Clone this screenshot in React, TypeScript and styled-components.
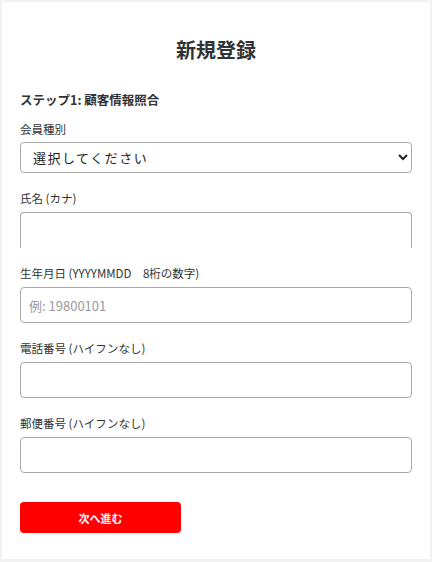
import styled, { createGlobalStyle } from "styled-components";

const GlobalStyle = createGlobalStyle`
  html, body {
    margin: 0;
    padding: 0;
    background: #f2f2f2;
  }
  body {
    padding: 2px;
    font-family: "Noto Sans CJK JP", "Noto Sans", sans-serif;
    color: #333;
  }
  * {
    box-sizing: border-box;
  }
`;

const fields = [
  { label: "氏名 (カナ)", placeholder: "", clipped: true },
  { label: "生年月日 (YYYYMMDD　8桁の数字)", placeholder: "例: 19800101" },
  { label: "電話番号 (ハイフンなし)", placeholder: "" },
  { label: "郵便番号 (ハイフンなし)", placeholder: "" },
];

export default function App() {
  return (
    <>
      <GlobalStyle />
      <SCard>
        <STitle>新規登録</STitle>
        <SStep>ステップ1: 顧客情報照合</SStep>
        <SField>
          <SLabel>会員種別</SLabel>
          <SSelect defaultValue="">
            <option value="">選択してください</option>
            <option value="a">一般会員</option>
            <option value="b">法人会員</option>
          </SSelect>
        </SField>
        {fields.map((f) => (
          <SField key={f.label}>
            <SLabel>{f.label}</SLabel>
            <SInput type="text" placeholder={f.placeholder} $clipped={f.clipped} />
          </SField>
        ))}
        <SButton type="button">次へ進む</SButton>
      </SCard>
    </>
  );
}

const SCard = styled.div`
  background: #fff;
  width: 428px;
  height: 557px;
  padding: 18px 18px 26px;
  display: flex;
  flex-direction: column;
`;

const STitle = styled.h1`
  margin: 16px 0 27px;
  font-size: 20px;
  line-height: 28px;
  font-weight: 700;
  text-align: center;
  color: #333;
`;

const SStep = styled.h2`
  margin: 0 0 11px;
  font-size: 12.5px;
  line-height: 18px;
  font-weight: 700;
  color: #333;
`;

const SField = styled.div`
  display: flex;
  flex-direction: column;
  margin-bottom: 16px;
`;

const SLabel = styled.label`
  font-size: 11.5px;
  line-height: 18px;
  margin-bottom: 5px;
  color: #333;
`;

const SSelect = styled.select`
  height: 31px;
  width: 100%;
  margin: -1px 0 0;
  padding: 0 8px;
  border: 1px solid #aaa;
  border-radius: 4px;
  background: #fff;
  font-family: "Noto Sans CJK JP", sans-serif;
  font-size: 13px;
  letter-spacing: 1.5px;
  color: #222;
`;

const SInput = styled.input<{ $clipped?: boolean }>`
  height: 36px;
  width: 100%;
  margin: 0;
  padding: 0 8px;
  border: 1px solid #aaa;
  border-radius: ${(p) => (p.$clipped ? "4px 4px 0 0" : "4px")};
  border-bottom: ${(p) => (p.$clipped ? "none" : "1px solid #aaa")};
  background: #fff;
  font-family: "Noto Sans CJK JP", sans-serif;
  font-size: 13px;
  color: #222;

  &::placeholder {
    color: #9a9a9a;
  }
`;

const SButton = styled.button`
  margin-top: 13px;
  width: 161px;
  height: 31px;
  border: none;
  border-radius: 4px;
  background: #ff0000;
  color: #fff;
  font-family: "Noto Sans CJK JP", sans-serif;
  font-size: 11px;
  font-weight: 700;
  cursor: pointer;
`;
